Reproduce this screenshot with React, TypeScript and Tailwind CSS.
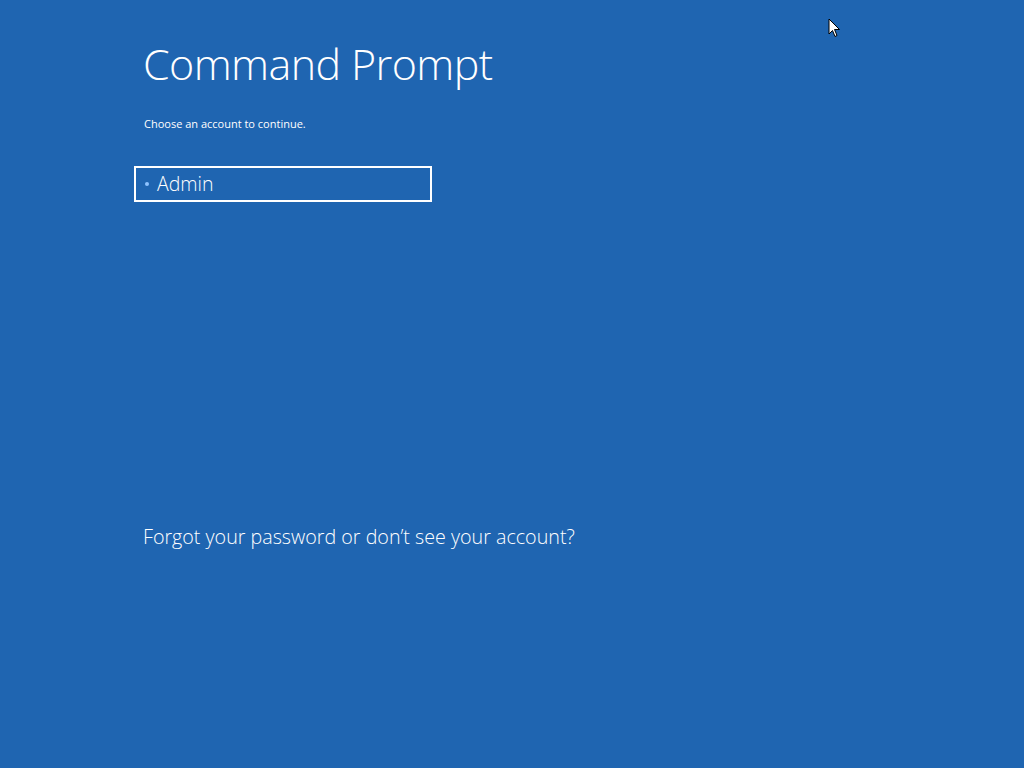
export default function App() {
  return (
    <div
      className="relative w-[1024px] h-[768px] bg-[#1f65b1] text-white overflow-hidden"
      style={{ fontFamily: '"Open Sans", "Noto Sans", sans-serif' }}
    >
      <div className="flex flex-col pl-[143px] pt-[36px]">
        <h1 className="text-[43px] font-light leading-[56px] tracking-[-0.6px]">Command Prompt</h1>
        <p className="mt-[25px] text-[11px] leading-[14px] pl-[1px]">Choose an account to continue.</p>
        <div className="mt-[35px] -ml-[9px] w-[298px] h-[36px] border-2 border-white flex items-center pl-[9px] gap-[8px]">
          <span className="w-[4px] h-[4px] rounded-full bg-[#8fc3ff]" />
          <span className="text-[19.5px] font-light leading-none">Admin</span>
        </div>
        <p className="mt-[322px] text-[19.7px] font-light leading-[25px]">
          Forgot your password or don’t see your account?
        </p>
      </div>
      <svg className="absolute left-[828px] top-[18px]" width="13" height="21" viewBox="0 0 13 21">
        <path d="M1 1 L1 16 L4.5 12.5 L7 18.5 L9 17.5 L6.5 11.5 L11.5 11.5 Z" fill="white" stroke="black" strokeWidth="1" strokeLinejoin="miter" />
      </svg>
    </div>
  );
}
